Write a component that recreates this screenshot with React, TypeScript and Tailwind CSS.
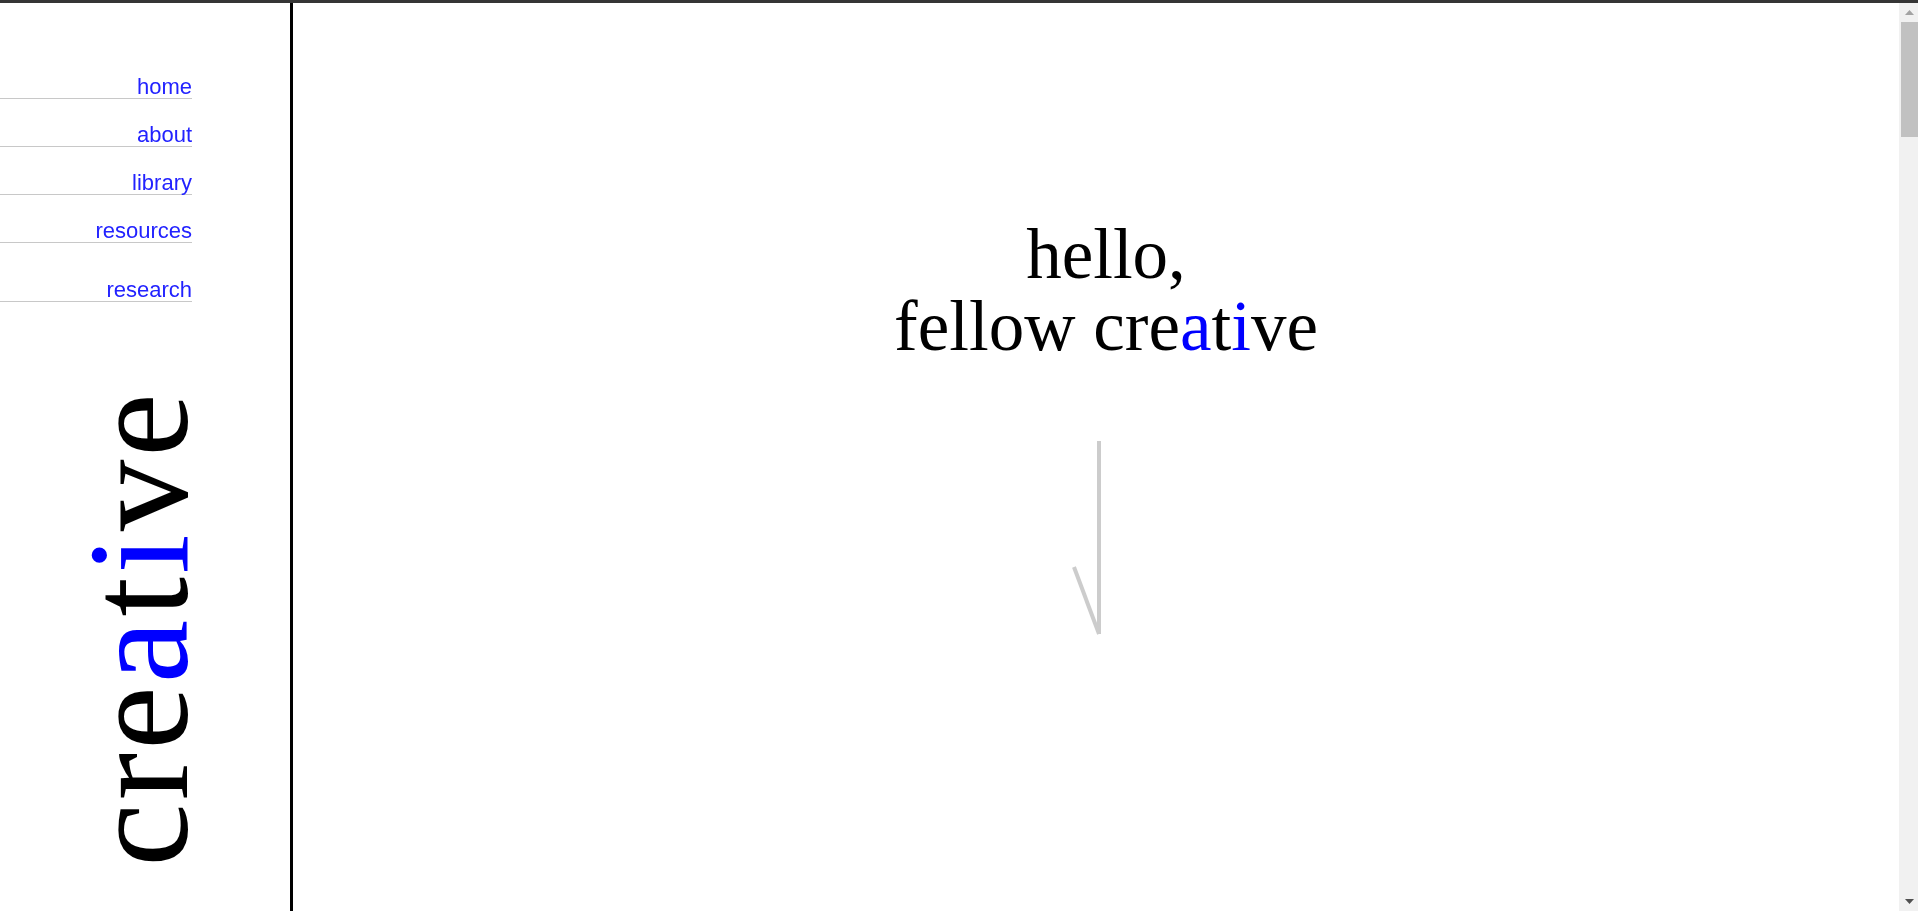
import React from "react";

const links: { label: string; gap: string }[] = [
  { label: "home", gap: "mt-0" },
  { label: "about", gap: "mt-[25px]" },
  { label: "library", gap: "mt-[25px]" },
  { label: "resources", gap: "mt-[25px]" },
  { label: "research", gap: "mt-[36px]" },
];

export default function App() {
  return (
    <div className="flex h-screen flex-col bg-white">
      <div className="h-[3px] shrink-0 bg-[#353535]" />
      <div className="flex min-h-0 flex-1">
        <div className="flex min-w-0 flex-1 overflow-y-auto">
          <Sidebar />
          <main className="min-h-[6950px] flex-1 pl-[20px]">
            <div className="pt-[215px] text-center font-['Liberation_Serif',serif] text-[71px] leading-[72px] text-black">
              <h1 className="font-normal">hello,</h1>
              <h1 className="font-normal">
                fellow cre<span className="text-[#0000ff]">a</span>t
                <span className="text-[#0000ff]">i</span>ve
              </h1>
            </div>
            <div className="mt-[75px] mr-[12px] flex justify-center">
              <ArrowDown />
            </div>
          </main>
        </div>
        <FakeScrollbar />
      </div>
    </div>
  );
}

function Sidebar() {
  return (
    <aside className="sticky top-0 flex h-[908px] w-[293px] shrink-0 flex-col border-r-[3px] border-black">
      <nav className="flex flex-col pt-[73px]">
        {links.map((item) => (
          <a
            key={item.label}
            href="#"
            className={`${item.gap} block w-[192px] border-b border-[#c8c8c8] text-right font-['Liberation_Sans',Arial,sans-serif] text-[22px] leading-[22px] text-[#2222ff]`}
          >
            {item.label}
          </a>
        ))}
      </nav>

      <div className="mt-[66px] flex h-[520px] w-[278px] items-center justify-center">
        <span className="-rotate-90 whitespace-nowrap font-['Liberation_Serif',serif] text-[143px] leading-[143px] tracking-[3px] text-black">
          cre<span className="text-[#0000ff]">a</span>t
          <span className="text-[#0000ff]">i</span>ve
        </span>
      </div>
    </aside>
  );
}

// static stand-in for the browser's scrollbar seen in the screenshot
function FakeScrollbar() {
  return (
    <div className="flex w-[19px] shrink-0 flex-col bg-[#f1f1f1]">
      <div className="flex h-[19px] items-center justify-center pl-[2px]">
        <svg width="9" height="5" viewBox="0 0 9 5">
          <path d="M4.5 0 L9 5 L0 5 Z" fill="#a3a3a3" />
        </svg>
      </div>
      <div className="ml-[2px] h-[115px] bg-[#c1c1c1]" />
      <div className="flex-1" />
      <div className="flex h-[19px] items-center justify-center pl-[2px]">
        <svg width="9" height="5" viewBox="0 0 9 5">
          <path d="M0 0 L9 0 L4.5 5 Z" fill="#505050" />
        </svg>
      </div>
    </div>
  );
}

function ArrowDown() {
  return (
    <svg width="60" height="200" viewBox="0 0 60 200" fill="none">
      <line x1="29" y1="4" x2="29" y2="197" stroke="#cccccc" strokeWidth="4" />
      <line x1="4" y1="130" x2="29" y2="197" stroke="#cccccc" strokeWidth="4" />
    </svg>
  );
}
